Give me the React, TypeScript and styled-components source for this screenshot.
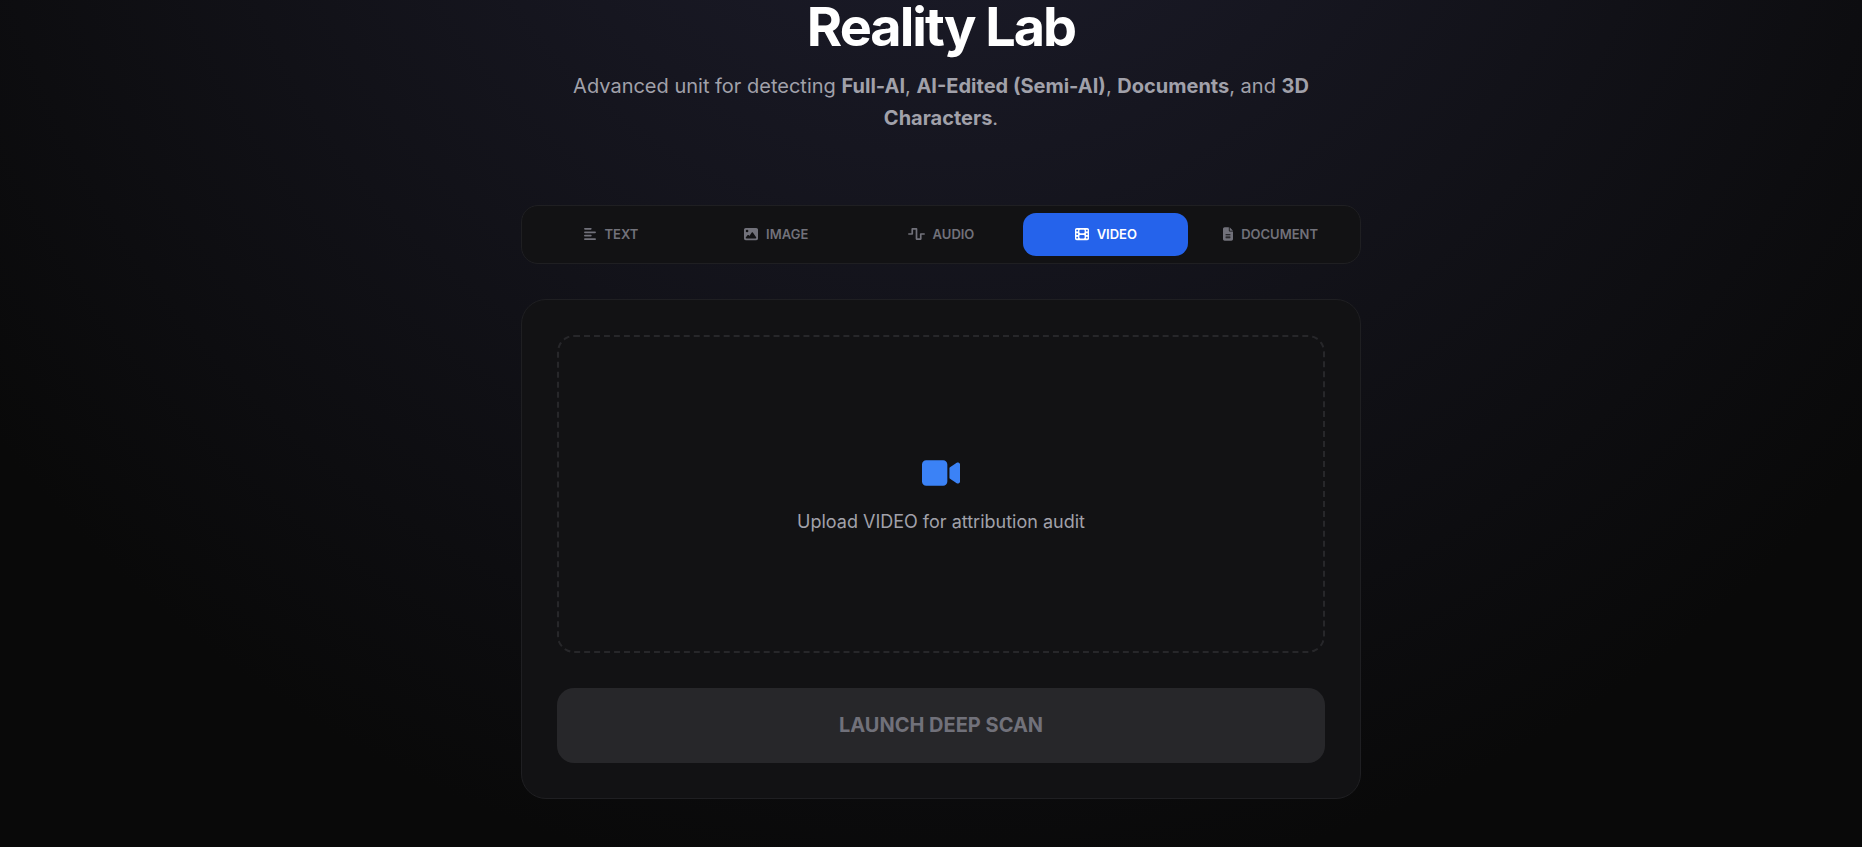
import React, { useState } from 'react';
import styled, { createGlobalStyle } from 'styled-components';
import { FaAlignLeft, FaImage, FaWaveSquare, FaFilm, FaFileLines, FaVideo } from 'react-icons/fa6';

const GlobalStyle = createGlobalStyle`
  *, *::before, *::after { box-sizing: border-box; }
  html { background: #090909; }
  body {
    margin: 0;
    min-height: 100vh;
    padding-left: 20px;
    background: radial-gradient(circle 1200px at calc(50% + 10px) -300px, #1e1e2e 0%, #090909 100%) no-repeat;
    color: #a1a1aa;
    font-family: Inter, 'Liberation Sans', sans-serif;
  }
  button { font-family: inherit; }
`;

const Page = styled.main`
  width: 100%;
  max-width: 880px;
  margin: 0 auto;
  padding: 0 20px 48px;
`;

const Header = styled.header`
  margin-bottom: 71px;
  text-align: center;
`;

const Title = styled.h1`
  margin: 0 0 16px;
  color: #fff;
  font-size: 54px;
  font-weight: 700;
  line-height: 54px;
  letter-spacing: -2px;
`;

const Subtitle = styled.p`
  max-width: 740px;
  margin: 0 auto;
  font-size: 20px;
  line-height: 32px;
`;

const Tabs = styled.nav`
  display: flex;
  margin-bottom: 35px;
  padding: 7px;
  border: 1px solid #1f1f22;
  border-radius: 17px;
  background: #121214;
`;

const Tab = styled.button<{ $active: boolean; $iconWidth: number }>`
  display: flex;
  flex: 1 1 0;
  align-items: center;
  justify-content: center;
  gap: 8px;
  height: 43px;
  padding: 0 0 2px;
  border: 0;
  border-radius: 13px;
  background: ${({ $active }) => ($active ? '#2563eb' : 'transparent')};
  color: ${({ $active }) => ($active ? '#fff' : '#71717a')};
  font-size: 13px;
  font-weight: 600;
  cursor: pointer;

  svg {
    flex: none;
    width: ${({ $iconWidth }) => $iconWidth}px;
    height: 14px;
  }
`;

const Card = styled.section`
  padding: 35px;
  border: 1px solid #1f1f22;
  border-radius: 25px;
  background: #121214;
`;

const DropZone = styled.button`
  display: flex;
  flex-direction: column;
  align-items: center;
  justify-content: center;
  gap: 20px;
  width: 100%;
  height: 318px;
  margin-bottom: 35px;
  padding: 2px 0 0;
  border: 2px dashed #27272a;
  border-radius: 17px;
  background: transparent;
  color: #a1a1aa;
  font-size: 18px;
  line-height: 24px;
  cursor: pointer;

  svg {
    width: 38px;
    height: 34px;
    color: #3b82f6;
  }
`;

const LaunchButton = styled.button`
  display: block;
  width: 100%;
  height: 75px;
  padding: 0 0 2px;
  border: 0;
  border-radius: 17px;
  background: #27272a;
  color: #71717a;
  font-size: 20px;
  font-weight: 700;
`;

const modes = [
  { name: 'TEXT', Icon: FaAlignLeft, iconWidth: 12 },
  { name: 'IMAGE', Icon: FaImage, iconWidth: 14 },
  { name: 'AUDIO', Icon: FaWaveSquare, iconWidth: 17 },
  { name: 'VIDEO', Icon: FaFilm, iconWidth: 14 },
  { name: 'DOCUMENT', Icon: FaFileLines, iconWidth: 10 },
];

export default function App() {
  const [mode, setMode] = useState('VIDEO');
  return (
    <>
      <GlobalStyle />
      <Page>
        <Header>
          <Title>Reality Lab</Title>
          <Subtitle>
            Advanced unit for detecting <b>Full-AI</b>, <b>AI-Edited (Semi-AI)</b>, <b>Documents</b>, and{' '}
            <b>3D Characters</b>.
          </Subtitle>
        </Header>
        <Tabs aria-label="Media type">
          {modes.map(({ name, Icon, iconWidth }) => (
            <Tab
              key={name}
              type="button"
              $active={name === mode}
              $iconWidth={iconWidth}
              aria-pressed={name === mode}
              onClick={() => setMode(name)}
            >
              <Icon aria-hidden="true" />
              {name}
            </Tab>
          ))}
        </Tabs>
        <Card>
          <DropZone type="button">
            <FaVideo aria-hidden="true" />
            {`Upload ${mode} for attribution audit`}
          </DropZone>
          <LaunchButton type="button" disabled>
            LAUNCH DEEP SCAN
          </LaunchButton>
        </Card>
      </Page>
    </>
  );
}
